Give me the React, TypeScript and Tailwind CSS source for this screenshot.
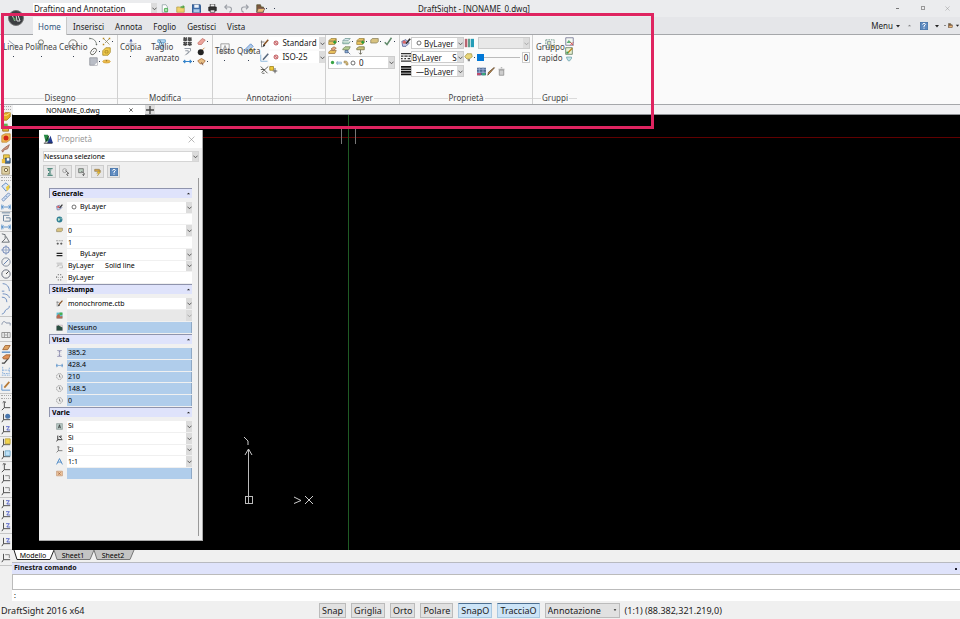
import React from 'react';
import clsx from 'clsx';

// All glyphs are drawn on a 12x12 grid
const glyphs: Record<string, React.ReactNode> = {
  line: <path d="M1 2l5 4 5 4" stroke="#6f7f90" />,
  polyline: <><path d="M1 11h3l1-4" stroke="#8a9aa8" /><circle cx="6" cy="4" r="3" stroke="#5a5a50" /></>,
  circle: <><circle cx="6" cy="6" r="5" stroke="#5a5a50" /><path d="M5 6h2" stroke="#222" /></>,
  arc: <path d="M1 2c5 0 9 3 9 9M1 1v2M9 10h2" stroke="#57605a" />,
  curve: <path d="M2 1c6 0 8 3 8 5M1 5c4 0 6 2 6 6" stroke="#5c7fb8" />,
  spline: <path d="M10 1c0 5-4 3-5 6s-2 3-4 4" stroke="#5c7fb8" />,
  arcBlue: <path d="M2 2c5 0 8 4 8 9M1 11h3" stroke="#5c7fb8" />,
  points: <><path d="M2 2l8 8M10 2L4 8" stroke="#8b8460" /><path d="M1 1h2v2H1zM9 1h2v2H9zM1 9h2v2H1z" fill="#b88a20" /></>,
  ellipse: <><ellipse cx="6" cy="6" rx="5" ry="3" transform="rotate(-50 6 6)" stroke="#4b4b42" /><path d="M5 7l2-2" stroke="#777" /></>,
  ring: <path d="M2 4l3-3h6v6l-3 4H1V5zM4 5h4v3H4z" fill="#f2cc50" stroke="#a3811a" />,
  hatch: <><path d="M1 1h10v10H1z" fill="#b9bdc6" stroke="#8c8f97" /><path d="M7 11l4-4v4z" fill="#f5f5f5" /></>,
  disc: <><ellipse cx="6" cy="6" rx="5" ry="2" fill="#eebd4c" stroke="#cf9d35" /><circle cx="6" cy="5" r="1" fill="#9d7522" /></>,
  copy: <><path d="M6 0v12M1 6h10" stroke="#8290b0" /><path d="M4 3l2-3 2 3z" fill="#34499a" /></>,
  trim: <><path d="M1 1h9v3H1zM3 4v7h5V4" fill="#bfe0f7" stroke="#4b93c8" /><path d="M3 1l5 9" stroke="#456" /></>,
  pattern: <path d="M1 1h4v4H1zM7 1h4v4H7zM1 7h4v4H1zM7 7h4v4H7z" fill="#555" stroke="#111" strokeDasharray="2 1" />,
  eraser: <path d="M1 8l6-6 4 2-5 6H2z" fill="#eba49b" stroke="#c17068" />,
  offset: <path d="M2 2h8v3L5 10M3 5h4v2L3 11" stroke="#737b87" />,
  bomb: <><circle cx="5" cy="7" r="4" fill="#222" /><path d="M7 4l3-3" stroke="#c47722" /></>,
  stretch: <path d="M0 6h12M3 4L1 6l2 2M9 4l2 2-2 2" stroke="#3584cb" strokeWidth="1.5" />,
  palette: <><path d="M1 5l5-3 5 3-3 4H4z" fill="#e6bd83" stroke="#a66532" /><path d="M6 7l2 4" stroke="#644" /></>,
  text: <path d="M1 1h10v10H1zM4 8l2-5 2 5M5 6h2" stroke="#858585" />,
  dim: <><path d="M1 8l7-7 3 3-7 7z" fill="#a8c6ea" stroke="#4e80c1" /><path d="M8 6l3 3-2 2-2-2z" fill="#f0c742" stroke="#aa8822" /></>,
  brush: <><path d="M2 2v9M1 4h5" stroke="#666" /><path d="M11 1L5 8" stroke="#885223" strokeWidth="2" /><path d="M5 7l-2 4 4-2z" fill="#222" /></>,
  brushBlue: <><path d="M1 2v9h9" stroke="#6da4d2" /><path d="M11 1L4 9" stroke="#58697d" strokeWidth="2" /></>,
  cross: <path d="M1 2l9 9M11 2L2 10M1 6h5M3 11h3" stroke="#31312c" />,
  plusGold: <><path d="M1 2h5v5H1z" fill="#efca38" stroke="#9b7d16" /><path d="M8 4v7M5 8h6" stroke="#333" /></>,
  stop: <><circle cx="6" cy="6" r="4" fill="#efc1c1" stroke="#c25d62" strokeWidth="2" /><path d="M3 3l6 6" stroke="#a33" /></>,
  layer: <><path d="M1 5l3-3h7l-2 3zM1 6h8l2-3v4L9 10H1z" fill="#e7c05c" stroke="#9b8440" /><path d="M7 7h4M9 5v4" stroke="#2a9b3a" strokeWidth="2" /></>,
  layerBlue: <><path d="M1 5l3-3h7l-3 3z" fill="#d7e8ef" stroke="#6e9690" /><path d="M1 6v3h8l2-3" fill="#b9d8c8" stroke="#6e9690" /></>,
  layerPlain: <path d="M1 4l2-2h8v4L9 8H1z" fill="#d8c27f" stroke="#8a805d" />,
  layerStack: <><path d="M1 8l2-2h8l-2 4H1z" fill="#e7c05c" stroke="#9b7440" /><path d="M4 4l4-3 3 2-4 3z" fill="#e8a987" stroke="#9b6940" /></>,
  layerFind: <><path d="M1 4l3-3h7L9 5H1z" fill="#b5ce91" stroke="#728055" /><path d="M4 6h4v3H4zM8 8l3 3" fill="#89afd8" stroke="#465f88" /></>,
  layerDown: <><path d="M1 3l3-2h7v4H1z" fill="#cac277" stroke="#757042" /><path d="M6 5v6M4 9l2 2 2-2" stroke="#554" /></>,
  check: <path d="M1 7l3 3 6-9" stroke="#618a6b" strokeWidth="2" />,
  paint: <><path d="M1 4l5-2 4 4-4 4H2z" fill="#c2cbea" stroke="#535e91" /><circle cx="4" cy="5" r="2" fill="#db6565" /><path d="M11 1L6 7" stroke="#333" strokeWidth="2" /></>,
  dashes: <path d="M0 2h12M0 5h3m1 0h4m1 0h3M0 8h2m2 0h2m2 0h3M0 11h12" stroke="#333" strokeWidth="1.5" />,
  weights: <path d="M0 1h12M0 4h12M0 7h12M0 10h12" stroke="#111" strokeWidth="2" />,
  bars: <><path d="M1 1h3v10H1z" fill="#b86570" /><path d="M5 1h2v10H5z" fill="#438d79" /><path d="M8 1h4v10H8z" fill="#259db7" /></>,
  lamp: <><path d="M1 5l3-4h6l1 4-4 3H4z" fill="#e9d67a" stroke="#a69744" /><path d="M5 8h3v3H5z" fill="#888" /></>,
  swatch: <><path d="M0 1h12v10H0z" fill="#4a678f" /><path d="M0 3h12M0 7h12M3 0v12M8 0v12" stroke="#a9b9df" /><path d="M0 8h5v3H0z" fill="#bb4b6b" /><path d="M7 8h4v3H7z" fill="#35aa76" /></>,
  pencil: <path d="M10 1L3 9l-2 2 1-4 7-6z" fill="#c18a45" stroke="#61482f" />,
  bin: <path d="M3 4h6v7H3zM2 3h8M5 1h2" fill="#cdcdcd" stroke="#888" />,
  group: <><path d="M1 1h10v9H1z" stroke="#4b7f6b" strokeDasharray="2 1" /><path d="M3 3h4v4H3z" fill="#d4e6b4" stroke="#789" /><path d="M8 6l3 5-3-1z" fill="#e7ad29" /></>,
  groupRed: <><path d="M1 1h10v10H1z" fill="#f4f8f4" stroke="#668" /><path d="M2 8l3-4 4 4z" fill="#62b17a" /><path d="M7 7l4 4M11 7l-4 4" stroke="#d33" /></>,
  groupEdit: <><path d="M1 1h10v10H1z" fill="#e8f2d4" stroke="#476345" /><path d="M11 2L4 9" stroke="#bb8921" strokeWidth="2" /><path d="M2 7h3v3H2z" fill="#3d9b56" /></>,
  funnel: <path d="M1 2h10v3L7 10H5L2 6z" fill="#c1e2e6" stroke="#397f89" />,
  newDoc: <><path d="M3 1h5l2 3v7H3z" fill="#fff" stroke="#8d9fa0" /><circle cx="8" cy="8" r="3" fill="#42ad48" /><path d="M6 8h4M8 6v4" stroke="#fff" /></>,
  open: <><path d="M1 4h4l1 1h5v6H1z" fill="#efd26b" stroke="#b49d49" /><path d="M6 3h3V1l3 3-3 2V5H6z" fill="#54a344" /></>,
  save: <><path d="M0 1h11l1 1v9H0z" fill="#3f6ca8" stroke="#294d7f" /><path d="M3 1h6v4H3z" fill="#eef3fa" /><path d="M2 7h8v4H2z" fill="#abcbea" /></>,
  print: <><path d="M3 0h6v4H3z" fill="#eee" stroke="#333" /><path d="M1 4h10v5H1z" fill="#333" stroke="#222" /><path d="M3 8h6v3H3z" fill="#fff" stroke="#333" /></>,
  undo: <path d="M4 1L1 4l3 3M1 4h6c4 0 4 6 0 7" stroke="#9ca0a7" strokeWidth="1.5" />,
  redo: <path d="M8 1l3 3-3 3M11 4H5c-4 0-4 6 0 7" stroke="#9ca0a7" strokeWidth="1.5" />,
  folder: <><path d="M1 1h5l1 3h3v7H1z" fill="#7c573d" stroke="#553" /><path d="M3 6h9l-3 5H1z" fill="#e9bb76" stroke="#755" /></>,
  cube: <><path d="M1 5l4-3h6v5l-4 4H1z" fill="#e4ad24" stroke="#a77910" /><path d="M1 5h6l4-3" stroke="#fff0a0" /></>,
  cubeGreen: <><path d="M2 5h7v6H2z" fill="#e5b138" stroke="#947123" /><path d="M1 2h7v4H1z" fill="#64b553" /></>,
  cubeRed: <><path d="M1 3l4-2h6v7l-4 3H1z" fill="#f0b650" stroke="#c3893a" /><circle cx="6" cy="6" r="3" fill="#d22417" /></>,
  tag: <path d="M1 9l3-3 6-4-2 5-4 1-2 3z" fill="#d29a86" stroke="#956151" />,
  cubeSave: <><path d="M3 1h7v6H3z" fill="#f0cc4a" stroke="#aa8c30" /><path d="M5 5h6v6H5z" fill="#4973a4" stroke="#345" /><path d="M1 6h4v5H1z" fill="#edbd3c" /><path d="M7 5h3v3H7z" fill="#fff" /></>,
  box: <><path d="M1 2h9v9H1z" fill="#e1d4a8" stroke="#998455" /><circle cx="6" cy="6" r="2" stroke="#655230" fill="#faf5db" /></>,
  tape: <><path d="M1 5l5-4 5 5-5 5z" fill="#dbe8f8" stroke="#557fb7" /><path d="M6 6l4-3v5l-3 3z" fill="#eccb43" /></>,
  ruler: <path d="M1 9l8-8 2 2-8 8zM4 7l1 1M6 5l1 1" fill="#d7e5f7" stroke="#6384b3" />,
  dimH: <path d="M1 3v6M11 3v6M1 6h10M3 4L1 6l2 2M9 4l2 2-2 2" stroke="#4b89c8" />,
  dimV: <path d="M1 1h10M3 4h7M3 4v7M6 7h5v4H4" stroke="#55718f" />,
  leader: <path d="M1 1l4 1v5l-4 4h9L6 4" stroke="#555b61" />,
  center: <><circle cx="6" cy="6" r="4" stroke="#536eaa" /><path d="M6 0v12M0 6h12" stroke="#8c9fc1" /></>,
  diameter: <><circle cx="6" cy="6" r="5" stroke="#747d8e" /><path d="M3 9l6-6" stroke="#4c6da4" /></>,
  radius: <><circle cx="6" cy="6" r="5" stroke="#555d6e" /><path d="M6 6l3-3" stroke="#222" /></>,
  jog: <path d="M1 8c1-5 4-4 5-2h5v3" stroke="#75839c" />,
  tol: <path d="M1 3h10v6H1zM4 3v6M8 3v6M5 6h2" stroke="#858585" />,
  edit: <><path d="M1 11h10" stroke="#4a84c4" strokeWidth="1.5" /><path d="M2 8l3-5h6L8 8z" fill="#dfa363" stroke="#9b6232" /></>,
  editText: <><path d="M1 11h3l5-6" stroke="#444" strokeWidth="1.5" /><path d="M2 4l4-3h5L9 6H3z" fill="#e08f55" stroke="#9b6232" /></>,
  editPen: <><path d="M1 4v7h10" stroke="#4a84c4" /><path d="M10 1L4 8" stroke="#b67935" strokeWidth="2" /></>,
  dimBox: <path d="M1 11h10M2 1v8h8V1M2 5h8" stroke="#7ca7d9" strokeDasharray="2 1" />,
  ucs: <path d="M4 1v7h7M4 8l-3 3M2 2l2-2 2 2" stroke="#333" />,
  ucsBlue: <><path d="M3 1v7h8M3 8l-2 3" stroke="#333" /><circle cx="8" cy="4" r="3" fill="#4a77ad" /></>,
  ucsZ: <><path d="M3 1v7h8M3 8l-2 3" stroke="#333" /><path d="M6 2h4L7 6h4" stroke="#4554c4" /></>,
  ucsBox: <><path d="M3 1v7h8M3 8l-2 3" stroke="#333" /><path d="M5 2h5v4" stroke="#777" /></>,
  ucsGold: <><path d="M3 1v7h8M3 8l-2 3" stroke="#333" /><path d="M5 1h6v6H5z" fill="#f1d34b" stroke="#baa03c" /></>,
  ucsPane: <><path d="M3 1v7h8M3 8l-2 3" stroke="#333" /><path d="M5 1h6v6H5z" fill="#bee0f6" stroke="#67a3c7" /></>,
  globe: <><circle cx="6" cy="6" r="5" fill="#2f7e94" /><path d="M3 4h3l1 3-3 2zM8 2l2 3-2 1z" fill="#bfe3cb" /></>,
  scale: <><path d="M0 3h4M5 3h3M9 3h3" stroke="#777" /><path d="M1 8h4M7 8h4M3 6v4M9 6v4" stroke="#222" /></>,
  twoLines: <path d="M1 4h10M1 8h10" stroke="#222" strokeWidth="2" />,
  style: <path d="M1 2h10M2 5h9M1 8l4-2M6 10h5V6" stroke="#999" />,
  ghost: <path d="M3 1h2M7 1h2M1 4v3M11 4v3M3 10h2M7 10h2M4 6h1M7 6h1" stroke="#898989" strokeWidth="2" />,
  picture: <><path d="M1 1h10v10H1z" fill="#5dbdce" /><path d="M1 7l4-4 3 5 3-2v5H1z" fill="#bb6950" /><path d="M6 1h5v4H6z" fill="#47b04e" /></>,
  photo: <><path d="M1 2h10v9H1z" fill="#e9ead7" stroke="#775588" strokeWidth=".5" /><path d="M1 4l3-2 7 4v5H1z" fill="#294e40" /></>,
  height: <path d="M2 1h8M2 11h8M6 2v8M4 4l2-2 2 2M4 8l2 2 2-2" stroke="#6c6c9b" />,
  clock: <><circle cx="6" cy="6" r="5" stroke="#737373" strokeDasharray="3 1" /><path d="M6 3v4h2" stroke="#444" /></>,
  boxA: <><path d="M1 1h10v10H1z" fill="#b7c9c5" stroke="#81908d" /><path d="M4 9l2-6 2 6M5 7h2" stroke="#111" /></>,
  axis: <path d="M3 1v7h8M3 8l-2 3M5 2l5 4M7 2h3" stroke="#222" strokeWidth="1.5" />,
  letterA: <path d="M1 11L6 1l5 10M3 7h6" stroke="#4484c3" strokeWidth="1.5" />,
  badge: <><path d="M1 2h10v8H1z" fill="#edc69d" stroke="#bb8c69" /><path d="M3 4l5 4M8 4L4 8" stroke="#8d4c31" /></>,
  sum: <path d="M2 1h8M2 11h8M3 3l4 3-4 3h5M3 3h5" stroke="#397b6d" strokeWidth="1.5" />,
  pick: <><circle cx="4" cy="4" r="3" stroke="#888" /><path d="M5 4l5 4-3 1 2 3" stroke="#222" fill="#fff" /></>,
  pickBox: <><path d="M1 1h7v6H1z" fill="#bdd0c3" stroke="#555" /><path d="M5 5l5 4-3 1 2 2" stroke="#222" fill="#fff" /></>,
  flash: <><path d="M1 2h7l2 3H1z" fill="#dda947" stroke="#8b7854" /><path d="M7 4l-3 4h3l-2 4 5-6H7l2-2z" fill="#f0c633" stroke="#8f702e" strokeWidth=".5" /></>,
  help: <><path d="M0 0h12v12H0z" fill="#5f8bc0" stroke="#3e6696" /><path d="M4 4c0-3 5-2 4 0L6 6v2M6 9v1" stroke="#fff" strokeWidth="1.5" /></>,
  chevron: <path d="M1 4l5 5 5-5" stroke="#444" strokeWidth="2" />,
  down: <path d="M2 4h8L6 9z" fill="#222" />,
  up: <path d="M2 8h8L6 4z" fill="#222" />,
  close: <path d="M1 1l10 10M11 1L1 11" stroke="#888" />,
  closeTab: <path d="M1 1l10 10M11 1L1 11" stroke="#222" strokeWidth="2" />,
  plus: <path d="M6 0v12M0 6h12" stroke="#444" strokeWidth="2" />,
  dot: <circle cx="6" cy="6" r="4" stroke="#444" strokeWidth="1.5" />,
  bulb: <circle cx="6" cy="6" r="4" fill="#38a445" />,
  sun: <path d="M1 4h10v4H1zM3 2v8" fill="#bedaf0" stroke="#7ca0c0" />,
  lock: <path d="M2 2h5l3 4v4H6V6H2z" fill="#d4bb7b" stroke="#907b4a" />,
  app: <><path d="M1 1h5l2 8H3z" fill="#278a44" /><path d="M5 11l4-9 3 9z" fill="#243d91" /><path d="M1 11h10M7 2l-4 8" stroke="#171717" /></>,
};

const Icon = ({ name, className = 'size-[10px]' }: { name: string; className?: string }) => (
  <svg viewBox="0 0 12 12" fill="none" aria-hidden="true" className={clsx('shrink-0', className)}>
    {glyphs[name]}
  </svg>
);

const IconButton = ({ name, label, menu, className = 'size-[9px]' }: { name: string; label: string; menu?: boolean; className?: string }) => (
  <button type="button" aria-label={label} className="flex items-center">
    <Icon name={name} className={className} />
    {menu && <span className="ml-px size-px bg-gray-700" />}
  </button>
);

interface DropDownProps {
  label: string;
  value: string;
  className?: string;
  selectClass?: string;
  icon?: string;
  disabled?: boolean;
}

const DropDown: React.FC<DropDownProps> = ({ label, value, className, selectClass = 'pl-px', icon, disabled }) => (
  <div className={clsx('relative flex items-center', disabled ? 'bg-[#e8e8e8]' : 'bg-white', className)}>
    {icon && <Icon name={icon} className="absolute left-1 size-[6px]" />}
    <select aria-label={label} disabled={disabled} className={clsx('h-full w-full appearance-none bg-transparent outline-none', selectClass)}>
      <option>{value}</option>
    </select>
    <span className="pointer-events-none absolute inset-y-0 right-0 flex w-[6px] items-center justify-center bg-[#dcdcdc]">
      <Icon name="chevron" className={clsx('size-[5px]', disabled && 'opacity-40')} />
    </span>
  </div>
);

const RibbonGroup = ({ title, className, children }: { title: string; className: string; children: React.ReactNode }) => (
  <section className={clsx('flex shrink-0 flex-col border-r border-[#d0d0d0]', className)}>
    <div className="flex h-[57px] items-start pt-0.5">{children}</div>
    <div className="flex h-3 items-center gap-px text-[8px] leading-3 text-[#444]">
      <span className="h-px flex-1 bg-[#dadada]" />
      {title}
      <span className="h-px flex-1 bg-[#dadada]" />
    </div>
  </section>
);

// Big ribbon button, the label runs over its icon
const BigButton = ({ icon, label, second, className }: { icon: string; label: string; second?: string; className?: string }) => (
  <button type="button" className={clsx('relative flex flex-col items-center pt-1 text-[8px] leading-[11px] text-[#444]', className)}>
    <Icon name={icon} className="absolute top-[2px] size-[10px] opacity-90" />
    <span className="relative">{label}</span>
    {second ? <span>{second}</span> : <span className="mt-1 size-px bg-gray-700" />}
  </button>
);

const toolGroups = [
  { height: 'h-[65px]', icons: ['cube', 'cubeGreen', 'cubeRed', 'tag', 'cubeSave', 'box'], grip: true },
  { height: 'h-[30px]', icons: ['tape', 'ruler', 'dimH'], grip: true },
  { height: 'h-5', icons: ['dimV', 'dimH'] },
  { height: 'h-[49px]', icons: ['leader', 'center', 'diameter', 'radius'] },
  { height: 'h-9', icons: ['arcBlue', 'curve', 'spline'] },
  { height: 'h-[25px]', icons: ['jog', 'tol'] },
  { height: 'h-9', icons: ['edit', 'editText', 'dimBox'] },
  { height: 'h-4', icons: ['editPen'] },
  { height: 'h-[37px]', icons: ['ucs', 'ucsBlue', 'ucsZ'], grip: true },
  { height: 'h-[25px]', icons: ['ucsGold', 'ucsPane'] },
  { height: 'h-9', icons: ['ucs', 'ucsBox', 'ucsBox'] },
  { height: 'h-9', icons: ['ucsZ', 'ucsZ', 'ucsZ'] },
  { height: 'h-4', icons: ['ucsZ'] },
  { height: 'h-4', icons: ['ucsBox'] },
];

const SideToolbar = () => (
  <aside className="w-3 shrink-0 bg-[#f0f0f0]">
    {toolGroups.map((group, i) => (
      <div key={i}>
        {group.grip && (
          <div className="flex h-[6px] flex-col justify-evenly px-px">
            <span className="border-t border-dotted border-[#aaa]" />
            <span className="border-t border-dotted border-[#aaa]" />
          </div>
        )}
        <div className={clsx('flex flex-col items-center justify-around border-b border-[#c6c6c6]', group.height)}>
          {group.icons.map((name, j) => (
            <IconButton key={j} name={name} label={`${name} ${j + 1}`} className="size-[10px]" />
          ))}
        </div>
      </div>
    ))}
  </aside>
);

interface Row {
  icon: string;
  label: string;
  value: string;
  kind: 'select' | 'text' | 'readonly' | 'disabled';
  mark?: string;
  pad?: string;
}

const sections: { title: string; height: string; rows: Row[] }[] = [
  {
    title: 'Generale',
    height: 'h-[82px]',
    rows: [
      { icon: 'paint', label: 'Colore linea', value: 'ByLayer', kind: 'select', mark: 'dot', pad: 'pl-[13px]' },
      { icon: 'globe', label: 'Collegamento', value: '', kind: 'text' },
      { icon: 'layerPlain', label: 'Layer', value: '0', kind: 'select' },
      { icon: 'scale', label: 'Scala linea', value: '1', kind: 'text' },
      { icon: 'twoLines', label: 'Spessore linea', value: 'ByLayer', kind: 'select', pad: 'pl-[13px]' },
      { icon: 'style', label: 'Stile linea', value: 'ByLayer\u00a0\u00a0\u00a0\u00a0\u00a0\u00a0Solid line', kind: 'select' },
      { icon: 'ghost', label: 'Trasparenza', value: 'ByLayer', kind: 'text' },
    ],
  },
  {
    title: 'StileStampa',
    height: 'h-[36px]',
    rows: [
      { icon: 'brush', label: 'Tabella stili', value: 'monochrome.ctb', kind: 'select' },
      { icon: 'picture', label: 'Stile', value: '', kind: 'disabled' },
      { icon: 'photo', label: 'Spazio', value: 'Nessuno', kind: 'readonly' },
    ],
  },
  {
    title: 'Vista',
    height: 'h-[59px]',
    rows: [
      { icon: 'height', label: 'Altezza', value: '385.2', kind: 'readonly' },
      { icon: 'dimH', label: 'Larghezza', value: '428.4', kind: 'readonly' },
      { icon: 'clock', label: 'Centro X', value: '210', kind: 'readonly' },
      { icon: 'clock', label: 'Centro Y', value: '148.5', kind: 'readonly' },
      { icon: 'clock', label: 'Centro Z', value: '0', kind: 'readonly' },
    ],
  },
  {
    title: 'Varie',
    height: 'h-[59px]',
    rows: [
      { icon: 'boxA', label: 'Annotativo', value: 'Sì', kind: 'select' },
      { icon: 'axis', label: 'Icona UCS', value: 'Sì', kind: 'select' },
      { icon: 'ucs', label: 'UCS per vista', value: 'Sì', kind: 'select' },
      { icon: 'letterA', label: 'Scala annotazione', value: '1:1', kind: 'select' },
      { icon: 'badge', label: 'Nome UCS', value: '', kind: 'readonly' },
    ],
  },
];

const PropertyRow = ({ row }: { row: Row }) => (
  <div className="flex min-h-0 flex-1 items-stretch pb-px">
    <span className="flex w-[18px] items-center justify-end pr-1">
      <Icon name={row.icon} className="size-[7px]" />
    </span>
    {row.kind === 'select' || row.kind === 'disabled' ? (
      <DropDown label={row.label} value={row.value} icon={row.mark} disabled={row.kind === 'disabled'} className="flex-1" selectClass={row.pad ?? 'pl-px'} />
    ) : (
      <input
        aria-label={row.label}
        defaultValue={row.value}
        readOnly={row.kind === 'readonly'}
        className={clsx('min-w-0 flex-1 pl-px outline-none', row.kind === 'readonly' ? 'border-r border-[#8fa9c6] bg-[#b0cdeb]' : 'bg-white')}
      />
    )}
  </div>
);

const PropertiesPalette = () => (
  <div className="absolute top-[15px] left-[27px] w-[164px] border-r border-b border-[#aaa] bg-[#f0f0f0] pb-1 text-[7px] leading-[10px] text-black">
    <div className="flex h-[18px] items-center bg-white px-1 text-[8px] text-[#999]">
      <Icon name="app" className="mr-1 size-[10px]" />
      <h2 className="flex-1">Proprietà</h2>
      <button type="button" aria-label="Chiudi" className="mr-[3px]">
        <Icon name="close" className="size-[7px]" />
      </button>
    </div>
    <DropDown label="Selezione" value="Nessuna selezione" className="mt-[3px] mr-[3px] ml-1 h-[11px] border border-[#d5d5d5]" selectClass="" />
    <div className="mt-[3px] ml-1 flex gap-[3px]">
      {['sum', 'pick', 'pickBox', 'flash', 'help'].map((name) => (
        <button key={name} type="button" aria-label={name} className="flex size-[13px] items-center justify-center border border-[#ccc] bg-[#e6e6e6]">
          <Icon name={name} className="size-[8px]" />
        </button>
      ))}
    </div>
    <div className="mr-[3px] border-r border-[#999] pt-[10px] pr-[6px] pb-[56px] pl-[10px]">
      {sections.map((section) => (
        <section key={section.title}>
          <h3 className="flex h-[10px] items-center border-t border-l border-[#8f94ad] bg-[#dfe3fb] pr-px pl-[2px] font-bold">
            <span className="flex-1">{section.title}</span>
            <Icon name="up" className="size-[5px]" />
          </h3>
          <div className={clsx('mt-1 flex flex-col', section.height)}>
            {section.rows.map((row) => (
              <PropertyRow key={row.label} row={row} />
            ))}
          </div>
        </section>
      ))}
    </div>
  </div>
);

const TitleBar = () => (
  <header className="flex h-[17px] items-center bg-[#ebecee] pl-[33px] text-[8px] text-[#222]">
    <DropDown label="Area di lavoro" value="Drafting and Annotation" className="h-3 w-[124px]" />
    <div className="ml-[3px] flex items-center gap-[7px]">
      {['newDoc', 'open', 'save', 'print', 'undo', 'redo', 'folder'].map((name) => (
        <IconButton key={name} name={name} label={name} menu={name === 'folder'} className="size-[9px]" />
      ))}
      <span className="size-px bg-gray-700" />
    </div>
    <h1 className="ml-[143px] whitespace-nowrap">DraftSight - [NONAME_0.dwg]</h1>
    <div className="mr-[10px] ml-auto flex gap-5">
      <button type="button" aria-label="Riduci" className="flex size-[5px] items-center"><span className="h-px w-[3px] bg-[#777]" /></button>
      <button type="button" aria-label="Ripristina" className="size-[4px] border border-[#999]" />
      <button type="button" aria-label="Chiudi"><Icon name="close" className="size-[5px]" /></button>
    </div>
  </header>
);

const tabs = ['Inserisci', 'Annota', 'Foglio', 'Gestisci', 'Vista'];

const MenuTabs = () => (
  <nav className="flex h-[18px] items-stretch border-b border-[#a5a7aa] bg-[#e5e6e9] pl-[33px] text-[8px] leading-[19px] text-[#222]">
    <button type="button" className="-mb-px mr-1.5 w-[34px] border-r border-[#c8c8c8] bg-[#fafafa] text-[#31557c]">Home</button>
    <div className="flex gap-[11px]">
      {tabs.map((tab) => <button key={tab} type="button">{tab}</button>)}
    </div>
    <div className="ml-auto flex items-center gap-[6px]">
      <button type="button" className="flex items-center gap-[2px]">Menu <Icon name="down" className="size-[6px]" /></button>
      <Icon name="up" className="size-[5px] opacity-50" />
      <IconButton name="help" label="Guida" className="ml-0.5 size-[8px]" />
      <Icon name="down" className="size-[6px]" />
      <div className="-ml-0.5 flex items-center gap-[2px]">
        <span className="h-px w-0.5 bg-[#888]" />
        <Icon name="folder" className="size-[5px]" />
        <Icon name="down" className="size-[5px]" />
      </div>
    </div>
  </nav>
);

const Ribbon = () => (
  <div className="flex h-[70px] border-b border-[#a5a7aa] bg-[#fafafa] pl-[3px] text-[8px] text-[#222]">
    <RibbonGroup title="Disegno" className="w-[115px]">
      <BigButton icon="line" label="Linea" />
      <BigButton icon="polyline" label="Polilinea" className="ml-0.5" />
      <BigButton icon="circle" label="Cerchio" className="ml-0.5" />
      <div className="ml-px grid grid-cols-2 gap-x-[2px] gap-y-px">
        <IconButton name="arc" label="Arco" menu />
        <IconButton name="points" label="Punto" menu />
        <IconButton name="ellipse" label="Ellisse" menu />
        <IconButton name="ring" label="Regione" />
        <IconButton name="hatch" label="Tratteggio" menu />
        <IconButton name="disc" label="Anello" />
      </div>
    </RibbonGroup>
    <RibbonGroup title="Modifica" className="w-[95px]">
      <BigButton icon="copy" label="Copia" className="ml-0.5" />
      <BigButton icon="trim" label="Taglio" second="avanzato" className="ml-1" />
      <div className="ml-1 grid grid-cols-2 gap-x-[3px] gap-y-px">
        <IconButton name="pattern" label="Serie" />
        <IconButton name="eraser" label="Elimina" menu />
        <IconButton name="offset" label="Offset" />
        <IconButton name="bomb" label="Esplodi" />
        <IconButton name="stretch" label="Stira" menu />
        <IconButton name="palette" label="Proprietà" menu />
      </div>
    </RibbonGroup>
    <RibbonGroup title="Annotazioni" className="w-[113px]">
      <BigButton icon="text" label="Testo" className="mt-1 ml-0.5" />
      <BigButton icon="dim" label="Quota" className="mt-1 ml-0.5" />
      <div className="flex flex-1 flex-col gap-0.5">
        <div className="flex h-3 items-center">
          <IconButton name="brush" label="Stile testo" />
          <DropDown label="Stile testo" value="Standard" icon="stop" className="h-full flex-1" selectClass="pl-[13px]" />
        </div>
        <div className="flex h-3 items-center">
          <IconButton name="brushBlue" label="Stile quota" />
          <DropDown label="Stile quota" value="ISO-25" icon="stop" className="h-full flex-1" selectClass="pl-[13px]" />
        </div>
        <div className="flex">
          <IconButton name="cross" label="Centro" />
          <IconButton name="plusGold" label="Direttrice" />
        </div>
      </div>
    </RibbonGroup>
    <RibbonGroup title="Layer" className="w-[74px]">
      <div className="flex flex-1 flex-col pl-0.5">
        <div className="flex gap-[3px]">
          <IconButton name="layer" label="Gestore layer" menu />
          <IconButton name="layerBlue" label="Isola layer" menu />
          <IconButton name="layer" label="Congela layer" menu />
          <IconButton name="layerPlain" label="Blocca layer" menu />
          <IconButton name="check" label="Attiva layer" menu />
        </div>
        <div className="flex gap-[5px]">
          <IconButton name="layerStack" label="Layer corrente" />
          <IconButton name="layerFind" label="Trova layer" />
          <IconButton name="layerDown" label="Unisci layer" />
        </div>
        <div className="mt-px mr-1 flex h-[13px] items-center gap-px border border-[#ccc] bg-white pl-px">
          <Icon name="bulb" className="size-[5px]" />
          <Icon name="sun" className="size-[6px]" />
          <Icon name="lock" className="size-[6px]" />
          <Icon name="dot" className="size-[6px]" />
          <DropDown label="Layer attivo" value="0" className="h-full flex-1" selectClass="pl-0.5" />
        </div>
      </div>
    </RibbonGroup>
    <RibbonGroup title="Proprietà" className="w-[133px]">
      <div className="flex w-[64px] shrink-0 flex-col gap-0.5 pl-px">
        <div className="flex h-3 items-center">
          <Icon name="paint" />
          <DropDown label="Colore" value="ByLayer" icon="dot" className="h-full flex-1 border border-[#ccc]" selectClass="pl-[12px]" />
        </div>
        <div className="flex h-3 items-center">
          <Icon name="dashes" />
          <DropDown label="Stile linea" value={'ByLayer\u00a0\u00a0\u00a0\u00a0\u00a0S'} className="h-full flex-1 border border-[#ccc]" selectClass="" />
        </div>
        <div className="flex h-3 items-center">
          <Icon name="weights" />
          <DropDown label="Spessore" value="—ByLayer" className="h-full flex-1 border border-[#ccc]" selectClass="pl-[4px]" />
        </div>
      </div>
      <div className="flex min-w-0 flex-1 flex-col gap-0.5">
        <div className="flex h-3 items-center gap-1">
          <Icon name="bars" />
          <DropDown label="Stile stampa" value="" disabled className="mr-0.5 h-full min-w-0 flex-1 border border-[#ccc]" />
        </div>
        <div className="flex h-3 items-center gap-0.5">
          <IconButton name="lamp" label="Trasparenza" menu />
          <input type="range" aria-label="Livello trasparenza" defaultValue={0} className="h-2 w-0 min-w-0 flex-1 appearance-none bg-transparent [&::-webkit-slider-runnable-track]:h-px [&::-webkit-slider-runnable-track]:bg-[#bbb] [&::-webkit-slider-thumb]:-mt-[3px] [&::-webkit-slider-thumb]:size-[7px] [&::-webkit-slider-thumb]:appearance-none [&::-webkit-slider-thumb]:bg-[#0078d7]" />
          <output className="mr-0.5 w-2 shrink-0 border border-[#ccc] bg-white text-center leading-[9px]">0</output>
        </div>
        <div className="flex h-3 items-center gap-px pl-[13px]">
          <IconButton name="swatch" label="Tavolozza" />
          <IconButton name="pencil" label="Modifica" />
          <IconButton name="bin" label="Rimuovi" />
        </div>
      </div>
    </RibbonGroup>
    <RibbonGroup title="Gruppi" className="w-[44px] border-r-0">
      <BigButton icon="group" label="Gruppo" second="rapido" className="ml-[3px]" />
      <div className="flex flex-col items-center gap-px">
        <IconButton name="groupRed" label="Separa gruppo" className="size-[9px]" />
        <IconButton name="groupEdit" label="Modifica gruppo" className="size-[8px]" />
        <IconButton name="funnel" label="Selezione gruppo" className="size-[6px]" />
      </div>
    </RibbonGroup>
  </div>
);

const DocumentTabs = () => (
  <div className="flex h-[10px] shrink-0 items-center border-b border-[#8f9195] bg-[#f0f0f2] pl-px text-[7px] leading-[10px]">
    <div className="flex h-[10px] w-[132px] items-center bg-white pl-[33px]">
      <button type="button" className="pt-0.5">NONAME_0.dwg</button>
      <button type="button" aria-label="Chiudi scheda" className="mr-3 ml-auto"><Icon name="closeTab" className="size-[4px]" /></button>
    </div>
    <button type="button" aria-label="Nuovo disegno" className="flex h-full w-[10px] items-center justify-center bg-[#ddd]">
      <Icon name="plus" className="size-[8px]" />
    </button>
  </div>
);

const DrawingArea = () => (
  <main className="relative flex-1 bg-black">
    <svg className="absolute inset-0 h-full w-full" fill="none" shapeRendering="crispEdges">
      <line x1="0" y1="22.5" x2="100%" y2="22.5" stroke="#600000" />
      <line x1="336.5" y1="0" x2="336.5" y2="100%" stroke="#1f5a24" />
      <path d="M329.5 14v15M343.5 14v15" stroke="#777" />
      <path d="M236.5 389V334M233 381.5h7v7h-7z" stroke="#bbb" />
      <path d="M233 340l3.500-6 3.500 6M232 322l4 4v4M282 382l7 3.500-7 3M293 381l8 8M301 381l-8 8" stroke="#ccc" shapeRendering="auto" />
    </svg>
    <PropertiesPalette />
  </main>
);

const SheetTabs = () => (
  <div className="flex h-[13px] shrink-0 items-start border-b border-[#b8bac0] bg-[#f0f0f0] pl-px text-[7px] leading-[11px]">
    {['Modello', 'Sheet1', 'Sheet2'].map((sheet, i) => (
      <button key={sheet} type="button" className="relative h-[10px] w-10 text-center">
        <svg viewBox="0 0 40 10" className="absolute inset-0 h-full w-full overflow-visible" aria-hidden="true">
          <path d="M1 0l3 9.500h33l4-9.500" fill={i === 0 ? '#fff' : '#c4c4c4'} stroke={i === 0 ? '#222' : '#777'} />
        </svg>
        <span className="relative">{sheet}</span>
      </button>
    ))}
  </div>
);

const CommandWindow = () => (
  <section className="shrink-0 bg-white text-[7px]">
    <h2 className="flex h-[11px] items-center bg-[#dfe3fb] pr-[3px] pl-0.5 font-bold text-[#111]">
      <span className="flex-1">Finestra comando</span>
      <span className="size-0.5 bg-[#223]" />
    </h2>
    <textarea aria-label="Cronologia comandi" readOnly className="block h-4 w-full resize-none border border-r-0 border-[#bbb] bg-white outline-none" />
    <label className="flex h-[11px] items-center pl-0.5 leading-[10px]">
      :
      <input aria-label="Comando" className="min-w-0 flex-1 pl-1 outline-none" />
    </label>
  </section>
);

const StatusBar = () => (
  <footer className="flex h-[18px] items-center bg-[#f0f0f0] pl-px text-[9px] leading-[13px] text-[#222]">
    <span className="w-[318px] shrink-0">DraftSight 2016 x64</span>
    <div className="flex gap-[5px]">
      {['Snap', 'Griglia', 'Orto', 'Polare', 'SnapO', 'TracciaO'].map((mode) => (
        <button
          key={mode}
          type="button"
          className={clsx(
            'border px-0.5',
            mode.endsWith('O') ? 'border-[#a8c8e2] border-t-[#4c6f91] bg-[#cce4f7]' : 'border-[#bbb] bg-[#e1e1e1]',
          )}
        >
          {mode}
        </button>
      ))}
      <div className="relative flex w-[75px] items-center border border-[#bbb] bg-[#e1e1e1]">
        <select aria-label="Area di lavoro" className="w-full appearance-none bg-transparent pl-0.5 outline-none">
          <option>Annotazione</option>
        </select>
        <Icon name="down" className="pointer-events-none absolute right-[2px] size-[4px]" />
      </div>
      <span className="self-center whitespace-nowrap">(1:1) (88.382,321.219,0)</span>
    </div>
  </footer>
);

const App: React.FC = () => (
  <div className="relative flex min-h-screen flex-col overflow-hidden bg-[#f0f0f0] font-['Noto_Sans','Open_Sans',sans-serif]">
    <TitleBar />
    <MenuTabs />
    <Ribbon />
    <div className="flex flex-1">
      <SideToolbar />
      <div className="flex min-w-0 flex-1 flex-col">
        <DocumentTabs />
        <DrawingArea />
        <SheetTabs />
        <CommandWindow />
      </div>
    </div>
    <StatusBar />
    <button type="button" aria-label="Menu applicazione" className="absolute top-[10px] left-2 size-4">
      <svg viewBox="0 0 16 16" fill="none" aria-hidden="true">
        <circle cx="8" cy="8" r="7.500" fill="#3c3e42" stroke="#777" />
        <path d="M4 5l3 6M8 5h2l2 6H9z" stroke="#ddd" />
        <path d="M5 7l3 2-2 2z" fill="#57a65a" />
      </svg>
    </button>
    <div className="pointer-events-none absolute top-[13px] left-px h-[116px] w-[653px] border-[3px] border-[#df2460]" />
  </div>
);

export default App;
